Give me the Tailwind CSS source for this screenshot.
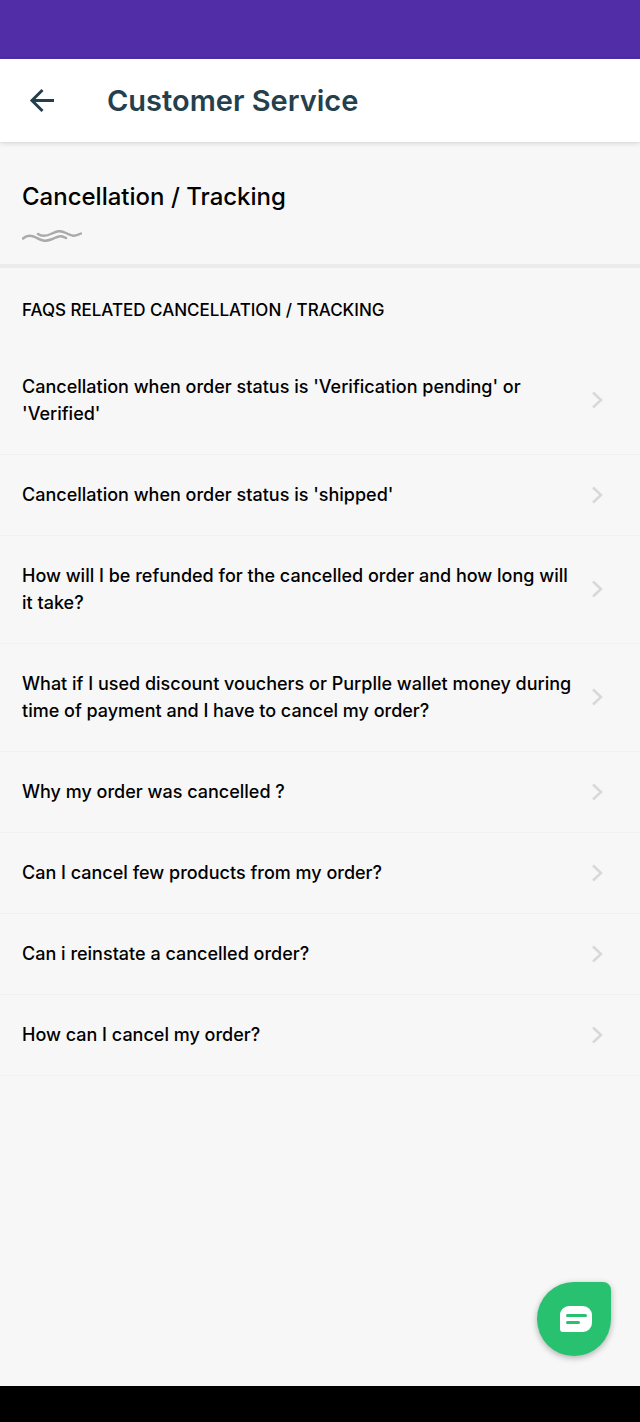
<!DOCTYPE html>
<html lang="en">
<head>
  <meta charset="UTF-8" />
  <meta name="viewport" content="width=device-width, initial-scale=1.0" />
  <title>Customer Service</title>
  <script src="https://cdn.jsdelivr.net/npm/@tailwindcss/browser@4"></script>
</head>
<body class="bg-[#f7f7f7] min-h-screen flex flex-col text-black font-medium font-['Inter','Liberation_Sans',sans-serif]">
  <!-- status bar -->
  <div class="h-[59px] bg-[#512da8]"></div>

  <header class="h-[83px] bg-white shadow-[0_1px_5px_rgba(0,0,0,0.16)] flex items-center gap-[53px] px-[29px] text-[#263f4d]">
    <button type="button" aria-label="Back">
      <svg class="w-[25px] h-[25px] block" viewBox="0 0 25 25" fill="none" stroke="currentColor" stroke-width="3">
        <path d="M25 12.5H3M13.5 2L3 12.5L13.5 23" />
      </svg>
    </button>
    <h1 class="text-[29px] leading-9 font-semibold">Customer Service</h1>
  </header>

  <main class="grow">
    <section class="px-[22px] pt-[37px] pb-5 border-b-4 border-[#e9ebec]">
      <h2 class="text-[24px] leading-9">Cancellation / Tracking</h2>
      <svg class="w-[60px] h-[14px] mt-[15px] block" viewBox="0 0 60 14" fill="none" stroke="#aaaaaa" stroke-width="2.500" stroke-linecap="round">
        <path d="M1 8.500C5 5 9 5 14 7.500S22 12 29 9.500S38 4.500 44 8" />
        <path d="M16 4C20 7 25 6 30 3.500S38 0 44 3S52 7 59 3.500" />
      </svg>
    </section>

    <section>
      <h3 class="px-[22px] pt-[29px] pb-[23px] text-[17px] leading-[27px] uppercase">FAQs related Cancellation / Tracking</h3>
      <ul class="text-[18px] leading-[27px]">
        <li>
          <a href="#" class="flex items-center justify-between gap-5 pt-[26px] pb-[27px] pl-[22px] pr-[37px] border-b border-[#f0f0f0]">
            <span>Cancellation when order status is 'Verification pending' or 'Verified'</span>
            <svg class="w-[11px] h-[18px] shrink-0" viewBox="0 0 11 18" fill="none" stroke="#d8d8d8" stroke-width="2.500"><path d="M1 1.500L9 9L1 16.500" /></svg>
          </a>
        </li>
        <li>
          <a href="#" class="flex items-center justify-between gap-5 pt-[26px] pb-[27px] pl-[22px] pr-[37px] border-b border-[#f0f0f0]">
            <span>Cancellation when order status is 'shipped'</span>
            <svg class="w-[11px] h-[18px] shrink-0" viewBox="0 0 11 18" fill="none" stroke="#d8d8d8" stroke-width="2.500"><path d="M1 1.500L9 9L1 16.500" /></svg>
          </a>
        </li>
        <li>
          <a href="#" class="flex items-center justify-between gap-5 pt-[26px] pb-[27px] pl-[22px] pr-[37px] border-b border-[#f0f0f0]">
            <span>How will I be refunded for the cancelled order and how long will it take?</span>
            <svg class="w-[11px] h-[18px] shrink-0" viewBox="0 0 11 18" fill="none" stroke="#d8d8d8" stroke-width="2.500"><path d="M1 1.500L9 9L1 16.500" /></svg>
          </a>
        </li>
        <li>
          <a href="#" class="flex items-center justify-between gap-5 pt-[26px] pb-[27px] pl-[22px] pr-[37px] border-b border-[#f0f0f0]">
            <span>What if I used discount vouchers or Purplle wallet money during time of payment and I have to cancel my order?</span>
            <svg class="w-[11px] h-[18px] shrink-0" viewBox="0 0 11 18" fill="none" stroke="#d8d8d8" stroke-width="2.500"><path d="M1 1.500L9 9L1 16.500" /></svg>
          </a>
        </li>
        <li>
          <a href="#" class="flex items-center justify-between gap-5 pt-[26px] pb-[27px] pl-[22px] pr-[37px] border-b border-[#f0f0f0]">
            <span>Why my order was cancelled ?</span>
            <svg class="w-[11px] h-[18px] shrink-0" viewBox="0 0 11 18" fill="none" stroke="#d8d8d8" stroke-width="2.500"><path d="M1 1.500L9 9L1 16.500" /></svg>
          </a>
        </li>
        <li>
          <a href="#" class="flex items-center justify-between gap-5 pt-[26px] pb-[27px] pl-[22px] pr-[37px] border-b border-[#f0f0f0]">
            <span>Can I cancel few products from my order?</span>
            <svg class="w-[11px] h-[18px] shrink-0" viewBox="0 0 11 18" fill="none" stroke="#d8d8d8" stroke-width="2.500"><path d="M1 1.500L9 9L1 16.500" /></svg>
          </a>
        </li>
        <li>
          <a href="#" class="flex items-center justify-between gap-5 pt-[26px] pb-[27px] pl-[22px] pr-[37px] border-b border-[#f0f0f0]">
            <span>Can i reinstate a cancelled order?</span>
            <svg class="w-[11px] h-[18px] shrink-0" viewBox="0 0 11 18" fill="none" stroke="#d8d8d8" stroke-width="2.500"><path d="M1 1.500L9 9L1 16.500" /></svg>
          </a>
        </li>
        <li>
          <a href="#" class="flex items-center justify-between gap-5 pt-[26px] pb-[27px] pl-[22px] pr-[37px] border-b border-[#f0f0f0]">
            <span>How can I cancel my order?</span>
            <svg class="w-[11px] h-[18px] shrink-0" viewBox="0 0 11 18" fill="none" stroke="#d8d8d8" stroke-width="2.500"><path d="M1 1.500L9 9L1 16.500" /></svg>
          </a>
        </li>
      </ul>
    </section>
  </main>

  <!-- chat button -->
  <button type="button" aria-label="Chat with us" class="fixed right-[29px] bottom-[66px] w-[74px] h-[74px] rounded-[37px] rounded-tr-lg bg-[#27c16f] shadow-[0_2px_6px_rgba(0,0,0,0.3)] flex items-center justify-center">
    <svg class="w-8 h-[26px] ml-1" viewBox="0 0 32 26" fill="none">
      <path d="M9 0H23A9 9 0 0 1 32 9V17A9 9 0 0 1 23 26H3A3 3 0 0 1 0 23V9A9 9 0 0 1 9 0Z" fill="#fff" />
      <path d="M7.500 9.500H25.500M7.500 16.500H18.500" stroke="#27c16f" stroke-width="3" stroke-linecap="round" />
    </svg>
  </button>

  <!-- navigation bar -->
  <footer class="h-9 bg-black"></footer>
</body>
</html>
